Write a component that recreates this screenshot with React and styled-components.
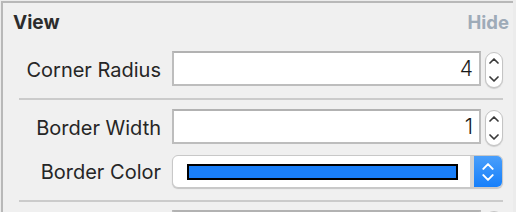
import styled, { createGlobalStyle } from "styled-components";

const Global = createGlobalStyle`
	html, body {
		margin: 0;
		padding: 0;
		background: #ececec;
	}
	body {
		font-family: Inter, "Liberation Sans", sans-serif;
		-webkit-font-smoothing: antialiased;
	}
`;

const Frame = styled.div`
	width: 516px;
	height: 212px;
	overflow: hidden;
	padding: 1px 0 0 1px;
	box-sizing: border-box;
	background: #ececec;
`;

const Panel = styled.div`
	width: 512px;
	height: 220px;
	box-sizing: border-box;
	border-top: 2px solid #b8b8b8;
	border-left: 2px solid #b8b8b8;
	background: #f0f0f0;
`;

const Header = styled.div`
	display: flex;
	justify-content: space-between;
	align-items: center;
	height: 36px;
	padding: 2px 4px 0 10px;
	box-sizing: border-box;

	h2 {
		margin: 0;
		font-size: 19px;
		font-weight: 700;
		color: #2c2c2c;
	}

	span {
		font-size: 18.5px;
		font-weight: 700;
		color: #9eabb8;
	}
`;

const Row = styled.div`
	display: grid;
	grid-template-columns: 158px 1fr;
	column-gap: 11px;
	align-items: center;
	padding: ${(p) => p.$top}px 10px ${(p) => p.$bottom}px 0;
`;

const Label = styled.label`
	text-align: right;
	font-size: 20px;
	color: #262626;
	white-space: nowrap;
`;

const Control = styled.div`
	display: flex;
	align-items: flex-start;
	gap: 4px;
`;

const Field = styled.div`
	flex: 1;
	height: 35px;
	box-sizing: border-box;
	background: #fff;
	border: 2px solid #bdbdbd;
	border-top-color: #b2b2b2;
	display: flex;
	align-items: center;
	justify-content: flex-end;
	padding-right: 6px;
	font-size: 21px;
	font-weight: 300;
	color: #1a1a1a;
`;

const Stepper = styled.div`
	width: 18px;
	height: 36px;
	margin-top: 1px;
	box-sizing: border-box;
	border-radius: 9px;
	background: #fff;
	border: 1px solid #c4c4c4;
	box-shadow: 0 1px 1px rgba(0, 0, 0, 0.15);
	display: flex;
	flex-direction: column;
	align-items: center;
	justify-content: space-between;
	padding: 5px 0;
`;

const Divider = styled.div`
	height: 2px;
	background: #cbcbcb;
	margin: 0 10px 0 16px;
`;

const Popup = styled.div`
	flex: 1;
	height: 33px;
	box-sizing: border-box;
	display: flex;
	border-radius: 6px;
	background: #fff;
	border: 1px solid #c8c8c8;
	box-shadow: 0 1px 1px rgba(0, 0, 0, 0.18);
	overflow: hidden;
`;

const SwatchWell = styled.div`
	flex: 1;
	display: flex;
	align-items: center;
	padding: 0 12px 0 14px;
	border-right: 4px solid #d4d4d4;
`;

const Swatch = styled.div`
	flex: 1;
	height: 16px;
	box-sizing: border-box;
	border: 2px solid #000;
	background: ${(p) => p.$color};
`;

const BlueArrows = styled.div`
	width: 28px;
	background: linear-gradient(#4a9ffb, #167ffa);
	display: flex;
	flex-direction: column;
	align-items: center;
	justify-content: center;
	gap: 4px;
`;

const NextRow = styled(Row)`
	padding-top: 8px;
`;

function Chevron({ up, color = "#3a3a3a", w = 10, h = 6 }) {
	return (
		<svg width={w} height={h} viewBox="0 0 10 6">
			<path
				d={up ? "M1 5 L5 1 L9 5" : "M1 1 L5 5 L9 1"}
				fill="none"
				stroke={color}
				strokeWidth="1.7"
				strokeLinecap="round"
				strokeLinejoin="round"
			/>
		</svg>
	);
}

function NumberRow({ label, value, top, bottom }) {
	return (
		<Row $top={top} $bottom={bottom}>
			<Label>{label}</Label>
			<Control>
				<Field>{value}</Field>
				<Stepper>
					<Chevron up />
					<Chevron />
				</Stepper>
			</Control>
		</Row>
	);
}

export default function App() {
	return (
		<>
			<Global />
			<Frame>
				<Panel>
					<Header>
						<h2>View</h2>
						<span>Hide</span>
					</Header>
					<NumberRow label="Corner Radius" value="4" top={12} bottom={10} />
					<Divider />
					<NumberRow label="Border Width" value="1" top={9} bottom={9} />
					<Row $top={0} $bottom={12}>
						<Label>Border Color</Label>
						<Control>
							<Popup>
								<SwatchWell>
									<Swatch $color="#1a7ff8" />
								</SwatchWell>
								<BlueArrows>
									<Chevron up color="#fff" w={12} h={7} />
									<Chevron color="#fff" w={12} h={7} />
								</BlueArrows>
							</Popup>
						</Control>
					</Row>
					<Divider />
					<NextRow $top={8} $bottom={0}>
						<Label />
						<Control>
							<Field />
							<Stepper />
						</Control>
					</NextRow>
				</Panel>
			</Frame>
		</>
	);
}
